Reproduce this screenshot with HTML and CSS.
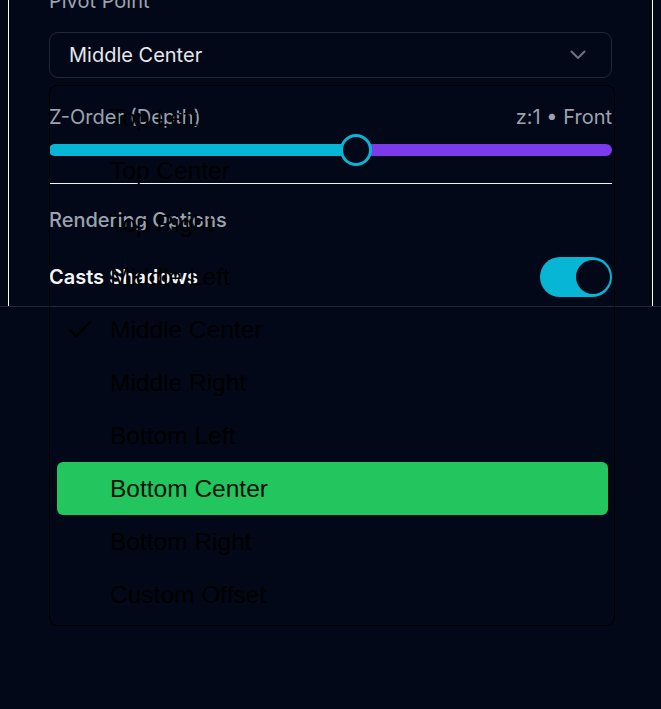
FILE: index.html
```html
<!DOCTYPE html>
<html lang="en">
<head>
<meta charset="utf-8">
<title>Pivot settings</title>
<link rel="stylesheet" href="styles.css">
</head>
<body>
<div class="frame">
  <div class="panel">
    <div class="label">Pivot Point</div>
    <div class="select-wrap">
      <div class="select">
        <span>Middle Center</span>
        <svg class="chev" width="16" height="10" viewBox="0 0 16 10"><polyline points="1.5,1.5 8,8 14.5,1.5" fill="none" stroke="#6b7280" stroke-width="2" stroke-linecap="round" stroke-linejoin="round"/></svg>
      </div>
      <div class="menu">
        <div class="item"><span class="slot"></span>Top Left</div>
        <div class="item"><span class="slot"></span>Top Center</div>
        <div class="item"><span class="slot"></span>Top Right</div>
        <div class="item"><span class="slot"></span>Middle Left</div>
        <div class="item"><span class="slot"><svg width="30" height="30" viewBox="0 0 24 24"><path d="M20 6 9 17l-5-5" fill="none" stroke="#000" stroke-width="2" stroke-linecap="round" stroke-linejoin="round"/></svg></span>Middle Center</div>
        <div class="item"><span class="slot"></span>Middle Right</div>
        <div class="item"><span class="slot"></span>Bottom Left</div>
        <div class="item active"><span class="slot"></span>Bottom Center</div>
        <div class="item"><span class="slot"></span>Bottom Right</div>
        <div class="item"><span class="slot"></span>Custom Offset</div>
      </div>
    </div>
    <div class="row z-row">
      <span class="label-inline">Z-Order (Depth)</span>
      <span class="label-inline">z:1 • Front</span>
    </div>
    <div class="slider">
      <div class="track">
        <div class="fill" style="width:54.6%"></div>
      </div>
      <div class="thumb" style="left:54.6%"></div>
    </div>
    <div class="rule"></div>
    <div class="section">Rendering Options</div>
    <div class="row toggle-row">
      <span class="toggle-label">Casts Shadows</span>
      <div class="toggle"><div class="knob"></div></div>
    </div>
  </div>
</div>
</body>
</html>
```
FILE: styles.css
```css
* { box-sizing: border-box; }
html, body {
  margin: 0;
  background: #020817;
  font-family: Inter, "Noto Sans", sans-serif;
  font-size: 20px;
}
body { min-height: 709px; }
.frame {
  padding: 0 8px;
  border-bottom: 1px solid #1f2937;
}
.panel {
  border-left: 1px solid #ffffff;
  border-right: 1px solid #ffffff;
  padding: 0 40px 9px;
}
.label {
  margin-top: -11px;
  line-height: 24px;
  color: #9ca3af;
  margin-bottom: 19px;
}
.select-wrap {
  position: relative;
}
.select {
  height: 46px;
  border: 1px solid #1e293b;
  border-radius: 9px;
  padding: 0 19px 0 19px;
  display: flex;
  align-items: center;
  justify-content: space-between;
  color: #e5e7eb;
}
.chev { margin-right: 6px; }
.menu {
  position: absolute;
  z-index: 5;
  top: 53px;
  left: 0;
  width: calc(100% + 3px);
  height: 541px;
  border: 1px solid #000;
  border-radius: 8px;
  background: transparent;
  padding: 5px 6px 5px 7px;
  font-family: "Liberation Sans", Arial, sans-serif;
  font-size: 24.5px;
  color: #000;
}
.item {
  height: 53px;
  display: flex;
  align-items: center;
  border-radius: 6px;
  padding-left: 8px;
}
.item.active { background: #22c55e; color: #04110a; }
.slot {
  width: 45px;
  height: 30px;
  display: flex;
  align-items: center;
}
.row {
  display: flex;
  align-items: center;
  justify-content: space-between;
}
.z-row {
  margin-top: 27px;
  height: 24px;
}
.label-inline { color: #9ca3af; line-height: 24px; }
.slider {
  position: relative;
  margin-top: 5px;
  height: 32px;
  display: flex;
  align-items: center;
}
.track {
  width: 100%;
  height: 12px;
  border-radius: 6px;
  background: #7c3aed;
  overflow: hidden;
}
.fill {
  height: 100%;
  background: #06b6d4;
}
.thumb {
  position: absolute;
  top: 0;
  width: 32px;
  height: 32px;
  margin-left: -16px;
  border-radius: 50%;
  border: 3px solid #06b6d4;
  background: #020817;
}
.rule {
  margin-top: 17px;
  height: 1px;
  background: #f3f4f6;
}
.section {
  margin-top: 24px;
  line-height: 24px;
  color: #9ca3af;
  font-weight: 500;
}
.toggle-row {
  margin-top: 25px;
  height: 40px;
}
.toggle-label {
  color: #f3f4f6;
  font-weight: 600;
}
.toggle {
  width: 72px;
  height: 40px;
  border-radius: 20px;
  background: #06b6d4;
  display: flex;
  align-items: center;
  justify-content: flex-end;
  padding-right: 2px;
}
.knob {
  width: 34px;
  height: 34px;
  border-radius: 50%;
  background: #020817;
}
```
